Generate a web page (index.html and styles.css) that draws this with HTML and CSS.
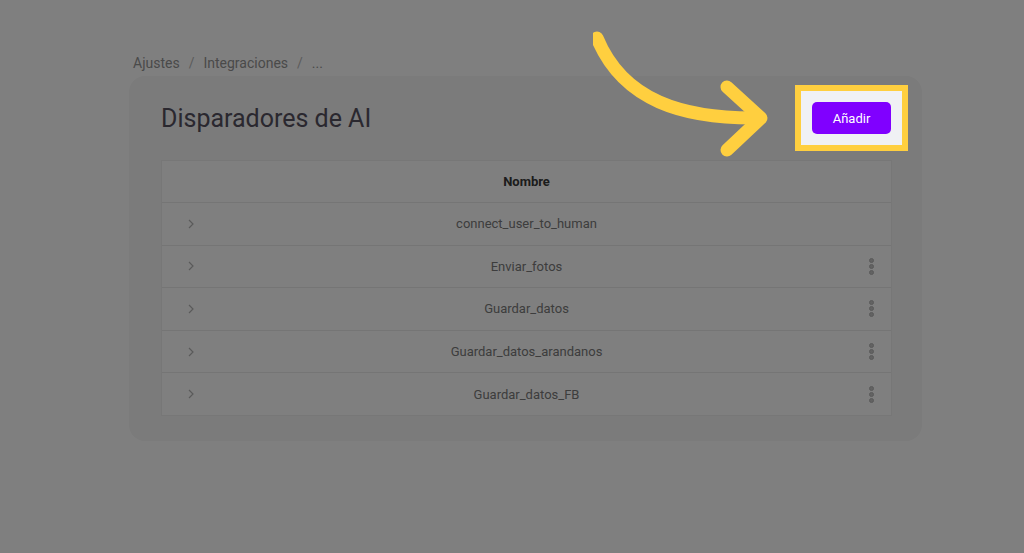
FILE: index.html
```html
<!DOCTYPE html>
<html lang="es">
<head>
    <meta charset="UTF-8">
    <title>Disparadores de AI</title>
    <link rel="stylesheet" href="styles.css">
</head>
<body>
    <div class="page">
        <div class="breadcrumb">
            <span>Ajustes</span><span class="sep">/</span>
            <span>Integraciones</span><span class="sep">/</span>
            <span>...</span>
        </div>

        <div class="card">
            <div class="card-head">
                <h1>Disparadores de AI</h1>
                <div class="spotlight">
                    <button class="btn-add">Añadir</button>
                </div>
            </div>

            <div class="table">
                <div class="row head">
                    <span class="cell-icon"></span>
                    <span class="cell-name">Nombre</span>
                    <span class="cell-menu"></span>
                </div>
                <div class="row">
                    <span class="cell-icon"><svg class="chev" width="6" height="10" viewBox="0 0 6 10"><path d="M1 1 L5 5 L1 9"/></svg></span>
                    <span class="cell-name">connect_user_to_human</span>
                    <span class="cell-menu"></span>
                </div>
                <div class="row">
                    <span class="cell-icon"><svg class="chev" width="6" height="10" viewBox="0 0 6 10"><path d="M1 1 L5 5 L1 9"/></svg></span>
                    <span class="cell-name">Enviar_fotos</span>
                    <span class="cell-menu"><i></i><i></i><i></i></span>
                </div>
                <div class="row">
                    <span class="cell-icon"><svg class="chev" width="6" height="10" viewBox="0 0 6 10"><path d="M1 1 L5 5 L1 9"/></svg></span>
                    <span class="cell-name">Guardar_datos</span>
                    <span class="cell-menu"><i></i><i></i><i></i></span>
                </div>
                <div class="row">
                    <span class="cell-icon"><svg class="chev" width="6" height="10" viewBox="0 0 6 10"><path d="M1 1 L5 5 L1 9"/></svg></span>
                    <span class="cell-name">Guardar_datos_arandanos</span>
                    <span class="cell-menu"><i></i><i></i><i></i></span>
                </div>
                <div class="row">
                    <span class="cell-icon"><svg class="chev" width="6" height="10" viewBox="0 0 6 10"><path d="M1 1 L5 5 L1 9"/></svg></span>
                    <span class="cell-name">Guardar_datos_FB</span>
                    <span class="cell-menu"><i></i><i></i><i></i></span>
                </div>
            </div>
        </div>
    </div>

    <!-- tutorial dim layer + pointer -->
    <div class="dim"></div>
    <svg class="pointer" width="200" height="140" viewBox="0 0 200 140">
        <path d="M4 12 C 30 75, 90 93, 166 92" fill="none" stroke="#ffcf3f" stroke-width="13" stroke-linecap="round"/>
        <path d="M134 61 L 168 92 L 134 124" fill="none" stroke="#ffcf3f" stroke-width="13" stroke-linecap="round" stroke-linejoin="round"/>
    </svg>
</body>
</html>
```

FILE: styles.css
```css
body { margin: 0; background: #fff; font-family: Roboto, "Open Sans", sans-serif; color: #333; }
.page { padding: 55px 102px 0 129px; }

.breadcrumb { font-size: 14px; color: #949494; padding-left: 4px; height: 21px; display: flex; gap: 7px; }
.breadcrumb .sep { color: #b8b8b8; margin: 0 2px; }

.card { background: #f6f6f6; border-radius: 16px; padding: 0 30px 25px 32px; }
.card-head { display: flex; justify-content: space-between; align-items: center; height: 84px; }
.card-head h1 { font-size: 25px; font-weight: 400; color: #55505f; margin: 0; }

.spotlight {
    position: relative; z-index: 20;
    background: #f0f1f4; border: 6px solid #ffcf3f;
    padding: 11px; margin-right: -16px;
}
.btn-add {
    background: #8000ff; color: #fff; border: 0; border-radius: 5px;
    font-family: inherit; font-size: 13px; width: 79px; height: 32px; display: block;
}

.table { background: #fff; border: 1px solid #efefef; }
.row {
    display: flex; align-items: center; height: 42.6px; box-sizing: border-box;
    border-top: 1px solid #eaeaea; font-size: 13px; color: #7a7a7a;
}
.row.head { border-top: 0; color: #383838; font-weight: 700; height: 41px; }
.cell-icon { width: 40px; padding-left: 26px; box-sizing: border-box; display: flex; }
.chev path { fill: none; stroke: #b4b4b4; stroke-width: 1.2; }
.cell-name { flex: 1; text-align: center; }
.cell-menu { width: 40px; display: flex; flex-direction: column; align-items: center; gap: 1px; }
.cell-menu i { width: 3px; height: 3px; background: #c4c4c4; border: 1px solid #b4b4b4; border-radius: 50%; }

.dim { position: fixed; inset: 0; background: rgba(0, 0, 0, 0.5); z-index: 10; }
.pointer { position: absolute; left: 593px; top: 26px; z-index: 20; }
```
